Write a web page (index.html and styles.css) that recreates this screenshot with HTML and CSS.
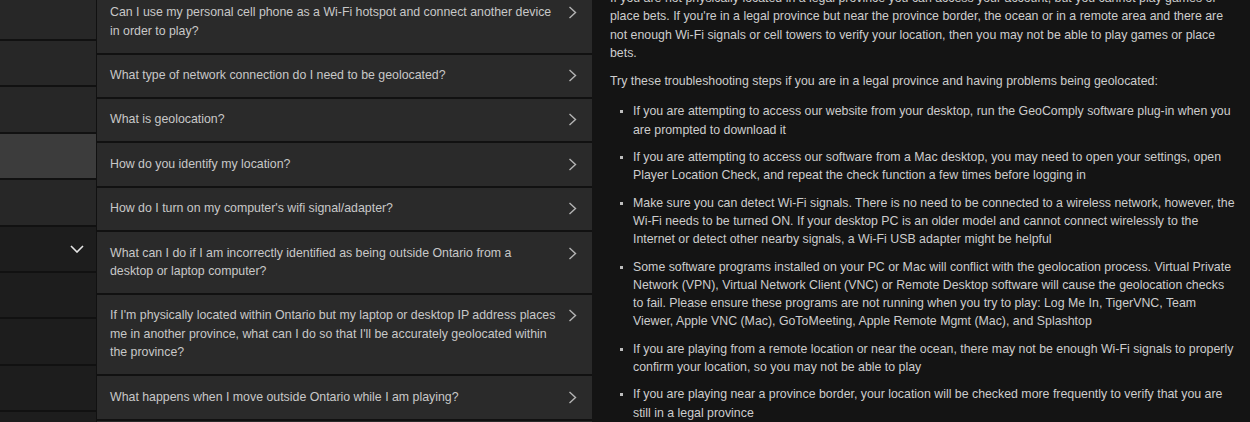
FILE: index.html
```html
<!DOCTYPE html>
<html lang="en">
<head>
<meta charset="utf-8">
<link rel="stylesheet" href="styles.css">
</head>
<body>
<div class="page">
  <nav class="side">
    <div class="side-row"></div>
    <div class="side-row"></div>
    <div class="side-row"></div>
    <div class="side-row active"></div>
    <div class="side-row"></div>
    <div class="side-row dark">
      <svg class="down" width="14" height="8" viewBox="0 0 14 8"><path d="M1 1l6 6 6-6" fill="none" stroke="#e6e6e6" stroke-width="1.6"/></svg>
    </div>
    <div class="side-row dark"></div>
    <div class="side-row dark"></div>
    <div class="side-row dark"></div>
    <div class="side-row dark"></div>
  </nav>
  <section class="faq">
    <div class="faq-item"><span class="q">Can I use my personal cell phone as a Wi-Fi hotspot and connect another device in order to play?</span><svg class="chev" width="9" height="13" viewBox="0 0 9 13"><path d="M1.5 1l6 5.5-6 5.5" fill="none" stroke="#b4b4b4" stroke-width="1.4"/></svg></div>
    <div class="faq-item"><span class="q">What type of network connection do I need to be geolocated?</span><svg class="chev" width="9" height="13" viewBox="0 0 9 13"><path d="M1.5 1l6 5.5-6 5.5" fill="none" stroke="#b4b4b4" stroke-width="1.4"/></svg></div>
    <div class="faq-item"><span class="q">What is geolocation?</span><svg class="chev" width="9" height="13" viewBox="0 0 9 13"><path d="M1.5 1l6 5.5-6 5.5" fill="none" stroke="#b4b4b4" stroke-width="1.4"/></svg></div>
    <div class="faq-item"><span class="q">How do you identify my location?</span><svg class="chev" width="9" height="13" viewBox="0 0 9 13"><path d="M1.5 1l6 5.5-6 5.5" fill="none" stroke="#b4b4b4" stroke-width="1.4"/></svg></div>
    <div class="faq-item"><span class="q">How do I turn on my computer's wifi signal/adapter?</span><svg class="chev" width="9" height="13" viewBox="0 0 9 13"><path d="M1.5 1l6 5.5-6 5.5" fill="none" stroke="#b4b4b4" stroke-width="1.4"/></svg></div>
    <div class="faq-item"><span class="q">What can I do if I am incorrectly identified as being outside Ontario from a desktop or laptop computer?</span><svg class="chev" width="9" height="13" viewBox="0 0 9 13"><path d="M1.5 1l6 5.5-6 5.5" fill="none" stroke="#b4b4b4" stroke-width="1.4"/></svg></div>
    <div class="faq-item"><span class="q">If I'm physically located within Ontario but my laptop or desktop IP address places me in another province, what can I do so that I'll be accurately geolocated within the province?</span><svg class="chev" width="9" height="13" viewBox="0 0 9 13"><path d="M1.5 1l6 5.5-6 5.5" fill="none" stroke="#b4b4b4" stroke-width="1.4"/></svg></div>
    <div class="faq-item"><span class="q">What happens when I move outside Ontario while I am playing?</span><svg class="chev" width="9" height="13" viewBox="0 0 9 13"><path d="M1.5 1l6 5.5-6 5.5" fill="none" stroke="#b4b4b4" stroke-width="1.4"/></svg></div>
    <div class="faq-item empty"></div>
  </section>
  <article class="answer">
    <p>If you are not physically located in a legal province you can access your account, but you cannot play games or place bets. If you're in a legal province but near the province border, the ocean or in a remote area and there are not enough Wi-Fi signals or cell towers to verify your location, then you may not be able to play games or place bets.</p>
    <p>Try these troubleshooting steps if you are in a legal province and having problems being geolocated:</p>
    <ul>
      <li>If you are attempting to access our website from your desktop, run the GeoComply software plug-in when you are prompted to download it</li>
      <li>If you are attempting to access our software from a Mac desktop, you may need to open your settings, open Player Location Check, and repeat the check function a few times before logging in</li>
      <li>Make sure you can detect Wi-Fi signals. There is no need to be connected to a wireless network, however, the Wi-Fi needs to be turned ON. If your desktop PC is an older model and cannot connect wirelessly to the Internet or detect other nearby signals, a Wi-Fi USB adapter might be helpful</li>
      <li>Some software programs installed on your PC or Mac will conflict with the geolocation process. Virtual Private Network (VPN), Virtual Network Client (VNC) or Remote Desktop software will cause the geolocation checks to fail. Please ensure these programs are not running when you try to play: Log Me In, TigerVNC, Team Viewer, Apple VNC (Mac), GoToMeeting, Apple Remote Mgmt (Mac), and Splashtop</li>
      <li>If you are playing from a remote location or near the ocean, there may not be enough Wi-Fi signals to properly confirm your location, so you may not be able to play</li>
      <li>If you are playing near a province border, your location will be checked more frequently to verify that you are still in a legal province</li>
    </ul>
  </article>
</div>
</body>
</html>
```

FILE: styles.css
```css
* { box-sizing: border-box; }
html, body { margin: 0; padding: 0; }
body {
  background: #111111;
  font-family: "Liberation Sans", Arial, sans-serif;
  font-size: 12.35px;
  overflow: hidden;
  height: 422px;
}
.page {
  display: flex;
  align-items: flex-start;
  height: 422px;
  overflow: hidden;
}
.side {
  width: 96px;
  flex: none;
  display: flex;
  flex-direction: column;
  gap: 2px;
  margin-top: -5.4px;
}
.side-row {
  height: 44.4px;
  background: #272727;
  display: flex;
  align-items: center;
  justify-content: flex-end;
  padding-right: 12px;
}
.side-row.active { background: #3c3c3c; }
.side-row.dark { background: #1d1d1d; }
.down { display: block; }
.faq {
  width: 495px;
  flex: none;
  margin-left: 1px;
  display: flex;
  flex-direction: column;
  gap: 2px;
  margin-top: -8.3px;
}
.faq-item {
  background: #2a2a2a;
  display: flex;
  align-items: flex-start;
  justify-content: space-between;
  padding: 11.5px 15px 12.5px 13px;
  line-height: 18.4px;
  color: #c8c8c8;
}
.faq-item.empty { height: 42px; }
.q { max-width: 446px; }
.chev { flex: none; margin-top: 3px; display: block; }
.answer {
  flex: 1;
  align-self: stretch;
  background: #141414;
  color: #cdcdcd;
  line-height: 18.3px;
  padding: 0 14.5px 0 18px;
  margin-top: -11px;
  height: 440px;
}
.answer p { margin: 0 0 10px; }
.answer ul {
  list-style: none;
  margin: 12px 0 0;
  padding: 0 0 0 23px;
}
.answer li {
  position: relative;
  margin-bottom: 9px;
}
.answer li::before {
  content: "";
  position: absolute;
  left: -13px;
  top: 8px;
  width: 3px;
  height: 3px;
  background: #bdbdbd;
}
```
